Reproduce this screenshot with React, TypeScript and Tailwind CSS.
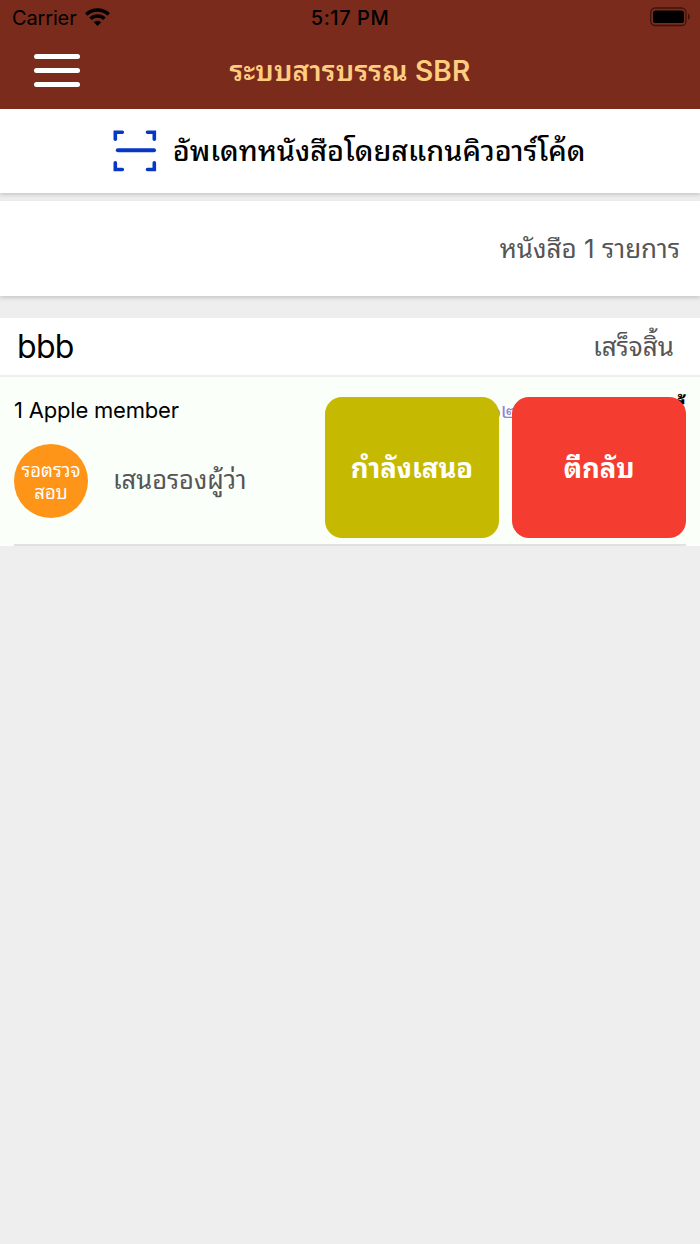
import React from 'react';

interface ActionButtonProps {
  label: string;
  className: string;
}

const WifiIcon: React.FC = () => (
  <svg width="25" height="18" viewBox="0 0 25 18" fill="none" stroke="#000" strokeWidth="3.5" className="-mt-0.5">
    <path d="M1.3 6.4C7.5 .5 17.5 .5 23.7 6.4" />
    <path d="M5.5 10.8C9.5 7 15.5 7 19.5 10.8" />
    <path d="M12.5 18L8.8 14.3C11 12.3 14 12.3 16.2 14.3Z" fill="#000" stroke="none" />
  </svg>
);

const BatteryIcon: React.FC = () => (
  <svg width="42" height="20" viewBox="0 0 42 20" className="-mt-0.5">
    <rect x="1.7" y="1" width="35.3" height="17.5" rx="4.5" fill="none" stroke="#000" strokeOpacity=".5" strokeWidth="1.3" />
    <rect x="4" y="3.4" width="31" height="12.6" rx="2.6" fill="#000" />
    <path d="M39 6.7C41.4 8 41.4 11.5 39 12.8Z" fill="#000" fillOpacity=".5" />
  </svg>
);

const ScanIcon: React.FC = () => (
  <svg width="44" height="42" viewBox="0 0 44 42" fill="none" stroke="#0638c4" strokeWidth="3.6" strokeLinecap="round">
    <path d="M2.3 9.3V2.2H9.3M34.5 2.2H41.3V9.3M2.3 32.8V39.5H9.3M34.5 39.5H41.3V32.8" />
    <path d="M4.8 20.3H41" strokeWidth="4" />
  </svg>
);

const ActionButton: React.FC<ActionButtonProps> = ({ label, className }) => (
  <button className={`h-[140.5px] w-[174px] rounded-[17px] pt-0.5 text-[27.4px] font-bold text-white ${className}`}>
    {label}
  </button>
);

const App: React.FC = () => {
  return (
    <div className="flex h-[1244px] w-[700px] flex-col overflow-hidden bg-[#eeeeee] font-[Inter,'Noto_Sans_Thai_Looped',Loma,Garuda,Waree,'Noto_Sans_Thai',sans-serif] text-black">
      <header className="h-[108.5px] shrink-0 bg-[#7b2b1b]">
        {/* Status bar */}
        <div className="grid h-9 grid-cols-3 items-center pr-[9px] pl-3 text-xl leading-none">
          <div className="flex items-center gap-2">
            <span className="tracking-[-0.15px]">Carrier</span>
            <WifiIcon />
          </div>
          <span className="pr-[3px] text-center font-medium tracking-[0.55px]">5:17 PM</span>
          <div className="flex justify-end">
            <BatteryIcon />
          </div>
        </div>

        <div className="grid h-[69px] grid-cols-[100px_1fr_100px] items-center">
          <button className="flex flex-col gap-[9px] pl-[34px]" aria-label="Menu">
            <span className="h-[5px] w-[46px] rounded-full bg-white" />
            <span className="h-[5px] w-[46px] rounded-full bg-white" />
            <span className="h-[5px] w-[46px] rounded-full bg-white" />
          </button>
          <h1 className="text-center text-[28px] font-semibold tracking-[0.2px] whitespace-nowrap text-[#ffcc80]">ระบบสารบรรณ SBR</h1>
        </div>
      </header>

      <button className="flex h-[84.5px] shrink-0 items-center justify-center gap-4 bg-white pr-0.5 shadow-[0_2px_4px_rgba(0,0,0,0.16)]">
        <ScanIcon />
        <span className="text-[28.7px] font-medium whitespace-nowrap">อัพเดทหนังสือโดยสแกนคิวอาร์โค้ด</span>
      </button>

      <div className="mt-2 flex h-[95px] shrink-0 items-center justify-end bg-white pr-5 text-[26px] text-[#555] shadow-[0_2px_4px_rgba(0,0,0,0.16)]">
        <span>หนังสือ 1 รายการ</span>
      </div>

      <div className="mt-[22px] flex h-[59px] shrink-0 items-center justify-between border-b-2 border-[#eeeeee] bg-white pr-[26px] pl-[17px]">
        <span className="text-[32px] tracking-[-0.7px]">bbb</span>
        <span className="text-[26px] text-[#555]">เสร็จสิ้น</span>
      </div>

      <div className="relative h-[169px] shrink-0 bg-[#fafffa] px-3.5">
        <div className="flex h-full flex-col border-b-2 border-[#dfe3df] pt-[17px]">
          <div className="flex h-8 items-center text-[22px]">
            <span className="tracking-[-0.2px]">1 Apple member</span>
            <span className="ml-auto pt-0.5 text-[20px] text-[#8f85d8]">๑๒</span>
            <span className="ml-[155px] pt-0.5 text-[22px] font-bold">นี้</span>
          </div>
          <div className="mt-[17.5px] flex items-center gap-[25px]">
            <div className="flex size-[74px] items-center justify-center rounded-full bg-[#ff9518] text-center text-[18.5px] leading-[22px] text-white">
              <span>
                รอตรวจ
                <br />
                สอบ
              </span>
            </div>
            <span className="text-[25.5px] text-[#555]">เสนอรองผู้ว่า</span>
          </div>
        </div>

        {/* Swipe actions cover the right side of the row */}
        <div className="absolute top-5 right-3.5 flex gap-[13px]">
          <ActionButton label="กำลังเสนอ" className="bg-[#c6b902]" />
          <ActionButton label="ตีกลับ" className="bg-[#f53c30]" />
        </div>
      </div>
    </div>
  );
};

export default App;
